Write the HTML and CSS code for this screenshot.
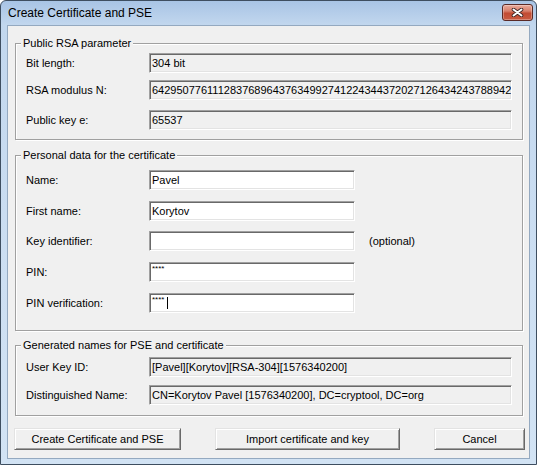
FILE: index.html
```html
<!DOCTYPE html>
<html lang="en">
<head>
<meta charset="utf-8">
<title>Create Certificate and PSE</title>
<link rel="stylesheet" href="styles.css">
</head>
<body>
<div class="window">
  <div class="titlebar">
    <span class="title">Create Certificate and PSE</span>
    <div class="close">
      <svg width="13" height="9" viewBox="0 0 13 9">
        <path d="M2.5 1.5 L10.5 7.5 M10.5 1.5 L2.5 7.5" stroke="#3c2424" stroke-width="3.6" stroke-linecap="round" fill="none"/>
        <path d="M2.5 1.5 L10.5 7.5 M10.5 1.5 L2.5 7.5" stroke="#ffffff" stroke-width="2" stroke-linecap="round" fill="none"/>
      </svg>
    </div>
  </div>
  <div class="client">
    <fieldset class="group g-rsa">
      <legend>Public RSA parameter</legend>
      <div class="body body-rsa">
        <div class="row"><span class="lbl">Bit length:</span><div class="edit ro">304 bit</div></div>
        <div class="row r-mod"><span class="lbl">RSA modulus N:</span><div class="edit ro">6429507761112837689643763499274122434437202712643424378894201573856120</div></div>
        <div class="row r-exp"><span class="lbl">Public key e:</span><div class="edit ro">65537</div></div>
      </div>
    </fieldset>

    <fieldset class="group g-personal">
      <legend>Personal data for the certificate</legend>
      <div class="body body-personal">
        <div class="row prow"><span class="lbl">Name:</span><div class="edit rw">Pavel</div></div>
        <div class="row prow gap11"><span class="lbl">First name:</span><div class="edit rw">Korytov</div></div>
        <div class="row prow gap10"><span class="lbl">Key identifier:</span><div class="edit rw"></div><span class="optional">(optional)</span></div>
        <div class="row prow gap11"><span class="lbl">PIN:</span><div class="edit rw"><span class="pw">****</span></div></div>
        <div class="row prow gap11"><span class="lbl">PIN verification:</span><div class="edit rw"><span class="pw">****</span><span class="caret"></span></div></div>
      </div>
    </fieldset>

    <fieldset class="group g-names">
      <legend>Generated names for PSE and certificate</legend>
      <div class="body body-names">
        <div class="row"><span class="lbl">User Key ID:</span><div class="edit ro">[Pavel][Korytov][RSA-304][1576340200]</div></div>
        <div class="row r-dn"><span class="lbl">Distinguished Name:</span><div class="edit ro">CN=Korytov Pavel [1576340200], DC=cryptool, DC=org</div></div>
      </div>
    </fieldset>

    <div class="buttons">
      <button class="btn b-create">Create Certificate and PSE</button>
      <button class="btn b-import">Import certificate and key</button>
      <button class="btn b-cancel">Cancel</button>
    </div>
  </div>
</div>
</body>
</html>
```

FILE: styles.css
```css
* { box-sizing: border-box; }

html, body {
  margin: 0;
  padding: 0;
}

body {
  width: 537px;
  height: 465px;
  overflow: hidden;
  background: #ffffff;
  font-family: "Liberation Sans", Arial, sans-serif;
  font-size: 11px;
  color: #000;
}

.window {
  width: 537px;
  height: 465px;
  border: 1px solid #3e4e60;
  border-radius: 6px 6px 0 0;
  background: linear-gradient(to bottom, #a8c4e5 0px, #c2d7ee 24px, #cddff2 60%, #d2e3f4 100%);
  padding: 0 6px 5px 6px;
  display: flex;
  flex-direction: column;
}

.titlebar {
  height: 24px;
  margin: 0 -6px;
  padding: 0 3px 0 7px;
  display: flex;
  align-items: flex-start;
  justify-content: space-between;
}

.title {
  margin-top: 5px;
  font-size: 12px;
  line-height: 14px;
  color: #000;
}

.close {
  width: 31px;
  height: 17px;
  margin-top: 3px;
  border: 1px solid #5a2a26;
  border-radius: 3px;
  background: linear-gradient(to bottom, #e9ab9c 0%, #d8806c 40%, #c24b33 55%, #c95b42 100%);
  box-shadow: inset 0 0 0 1px rgba(255, 255, 255, 0.3);
  display: flex;
  align-items: center;
  justify-content: center;
}

.client {
  flex: 1;
  background: #f0f0f0;
  border: 1px solid #94a9c0;
  display: flex;
  flex-direction: column;
}

.group {
  margin: 0 6px 0 7px;
  padding: 0;
  min-width: 0;
  border: 1px solid #a0a0a0;
  box-shadow: 1px 1px 0 #ffffff, inset 1px 1px 0 #ffffff;
}

.group legend {
  margin-left: 5px;
  padding: 0 2px;
  font-size: 11px;
  line-height: 13px;
  background: #f0f0f0;
}

.g-rsa { margin-top: 11px; }
.g-personal { margin-top: 9px; }
.g-names { margin-top: 8px; }

.body { padding: 0 10px; }
.body-rsa { padding-top: 3px; padding-bottom: 9px; }
.body-personal { padding-top: 8px; padding-bottom: 17px; }
.body-names { padding-top: 5px; padding-bottom: 10px; }

.row {
  display: grid;
  grid-template-columns: 123px 1fr;
  align-items: center;
}

.prow { grid-template-columns: 123px 206px auto; }

.r-mod { margin-top: 7px; }
.r-exp { margin-top: 10px; }
.r-dn { margin-top: 8px; }
.gap10 { margin-top: 10px; }
.gap11 { margin-top: 11px; }

.lbl {
  line-height: 13px;
  white-space: nowrap;
}

.edit {
  height: 20px;
  border: 1px solid;
  border-color: #a0a0a0 #ffffff #ffffff #a0a0a0;
  box-shadow: inset 1px 1px 0 #696969, inset -1px -1px 0 #e3e3e3;
  padding: 0 0 0 2px;
  line-height: 18px;
  white-space: nowrap;
  overflow: hidden;
}

.ro { background: #f0f0f0; }
.rw { background: #ffffff; }

.optional {
  margin-left: 14px;
  line-height: 13px;
}

.pw {
  display: inline-block;
  vertical-align: top;
  font-size: 8px;
  line-height: 10px;
  margin-top: 1px;
}

.caret {
  display: inline-block;
  vertical-align: top;
  width: 1px;
  height: 12px;
  margin-top: 3px;
  margin-left: 3px;
  background: #000;
}

.buttons {
  margin-top: 12px;
  padding: 0 4px 0 6px;
  display: flex;
  justify-content: space-between;
}

.btn {
  height: 22px;
  margin: 0;
  padding: 0;
  font-family: "Liberation Sans", Arial, sans-serif;
  font-size: 11px;
  line-height: 20px;
  color: #000;
  background: #f0f0f0;
  border: 1px solid;
  border-color: #e3e3e3 #696969 #696969 #e3e3e3;
  box-shadow: inset 1px 1px 0 #ffffff, inset -1px -1px 0 #a0a0a0;
  border-radius: 0;
}

.b-create { width: 167px; }
.b-import { width: 185px; }
.b-cancel { width: 91px; }
```
